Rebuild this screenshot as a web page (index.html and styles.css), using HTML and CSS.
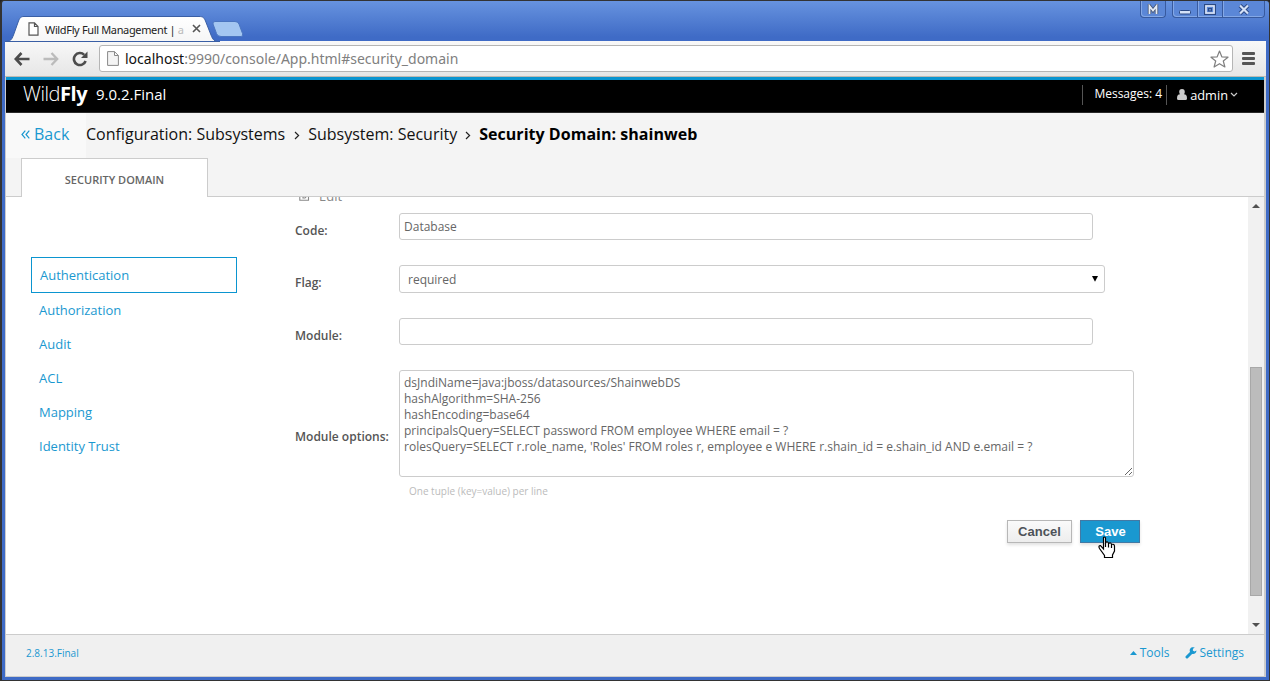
FILE: index.html
```html
<!DOCTYPE html>
<html lang="en">
<head>
<meta charset="utf-8">
<title>WildFly Full Management</title>
<link rel="stylesheet" href="styles.css">
</head>
<body>
<div class="window">
  <div class="titlebar">
    <svg class="tabshape" width="240" height="26" viewBox="0 0 240 26">
      <defs><linearGradient id="tg" x1="0" y1="0" x2="0" y2="1"><stop offset="0" stop-color="#fff"/><stop offset="1" stop-color="#f6f6f6"/></linearGradient></defs>
      <path d="M0 25.500C6 25 6.500 24 8.500 19L13.500 5C15 1.500 16 .5 19 .5H194C198 .5 199 1.500 200.500 5L206 19C208 24 209 25.500 215 25.500Z" fill="url(#tg)" stroke="#3a5fa5"/>
      <path d="M208 8Q207.500 5.500 210 5.500H230Q233 5.500 234 8L237.500 17.500Q238.500 20.500 236 20.500H216Q212.500 20.500 211.500 17.500Z" fill="#a3c6f1" stroke="#4a75c0"/>
    </svg>
    <div class="tabtext">
      <svg width="11" height="14" viewBox="0 0 11 14"><path d="M1 .8H6.500L10 4.500V13.200H1ZM6.500 .8V4.500H10" fill="#fff" stroke="#555" stroke-width="1.200"/></svg>
      <span class="tabname">WildFly Full Management | <i>a</i></span>
      <svg class="tabx" width="9" height="9" viewBox="0 0 9 9"><path d="M1 1L8 8M8 1L1 8" stroke="#555" stroke-width="1.600"/></svg>
    </div>
    <div class="wbtns">
      <div class="wb w1"><svg width="12" height="11" viewBox="0 0 12 11"><path d="M2.500 10V2L6 6.500L9.500 2V10" fill="none" stroke="#46536e" stroke-width="3.400"/><path d="M2.500 10V2L6 6.500L9.500 2V10" fill="none" stroke="#e4ebf6" stroke-width="1.800"/></svg></div>
      <div class="wb w2"><svg width="12" height="11" viewBox="0 0 12 11"><rect x=".5" y="6.500" width="11" height="3.500" rx="1" fill="#d5e2f8" stroke="#2c4a85"/></svg></div>
      <div class="wb w3"><svg width="12" height="11" viewBox="0 0 12 11"><rect x="1.500" y="1.500" width="9" height="8" fill="none" stroke="#2c4a85" stroke-width="3"/><rect x="2" y="2" width="8" height="7" fill="none" stroke="#d5e2f8" stroke-width="1.800"/><rect x="4.500" y="4.500" width="3" height="2.500" fill="none" stroke="#2c4a85"/></svg></div>
      <div class="wb w4"><svg width="12" height="11" viewBox="0 0 12 11"><path d="M2 1.500L10 9.500M10 1.500L2 9.500" stroke="#2c4a85" stroke-width="4"/><path d="M2 1.500L10 9.500M10 1.500L2 9.500" stroke="#d5e2f8" stroke-width="2.200"/></svg></div>
    </div>
  </div>
  <div class="toolbar">
    <svg class="nav" width="16" height="14" viewBox="0 0 16 14"><path d="M15.500 7H2M7.500 1L1.800 7L7.500 13" fill="none" stroke="#4c4c4c" stroke-width="2.600"/></svg>
    <svg class="nav" width="16" height="14" viewBox="0 0 16 14"><path d="M.5 7H14M8.500 1L14.200 7L8.500 13" fill="none" stroke="#bbb" stroke-width="2.300"/></svg>
    <svg class="nav" width="16" height="16" viewBox="0 0 16 16"><path d="M13.600 10A6 6 0 1 1 12.200 3.800" fill="none" stroke="#4c4c4c" stroke-width="2.600"/><path d="M15.500 .5V7H9Z" fill="#4c4c4c"/></svg>
    <div class="omni">
      <svg width="12" height="16" viewBox="0 0 12 16"><path d="M.6 .6H7.500L11.400 4.500V14.400H.6ZM7.500 .6V4.500H11.400" fill="#f4f4f4" stroke="#888"/></svg>
      <span class="url">localhost<i>:9990/console/App.html#security_domain</i></span>
      <svg class="star" width="19" height="18" viewBox="0 0 19 18"><path d="M9.500 1L11.800 6.800L18 7.200L13.300 11L14.900 17L9.500 13.700L4.100 17L5.700 11L1 7.200L7.200 6.800Z" fill="#fff" stroke="#808080" stroke-width="1.200" stroke-linejoin="round"/></svg>
    </div>
    <div class="burger"><b></b><b></b><b></b></div>
  </div>
  <div class="page">
    <header class="head">
      <span class="logo">Wild<b>Fly</b></span>
      <span class="ver">9.0.2.Final</span>
      <span class="msgs">Messages: 4</span>
      <span class="user">
        <svg width="10" height="11" viewBox="0 0 10 11"><path d="M5 0C7 0 7.800 1.300 7.800 3C7.800 4 7.400 4.800 7 5.300C9 5.500 10 6.500 10 9.500Q10 11 8.500 11H1.500Q0 11 0 9.500C0 6.500 1 5.500 3 5.300C2.600 4.800 2.200 4 2.200 3C2.200 1.300 3 0 5 0Z" fill="#ccc"/></svg>
        <span class="admin">admin</span>
        <svg width="8" height="5" viewBox="0 0 8 5"><path d="M1 1L4 4L7 1" fill="none" stroke="#ccc" stroke-width="1.200"/></svg>
      </span>
    </header>
    <div class="crumbs">
      <div class="back"><svg width="9" height="9" viewBox="0 0 9 9"><path d="M4.300 .7L1 4.500L4.300 8.300M8.300 .7L5 4.500L8.300 8.300" fill="none" stroke="#1a98d0" stroke-width="1.200"/></svg><span>Back</span></div>
      <span class="c1">Configuration: Subsystems</span>
      <svg class="chev" width="6" height="9" viewBox="0 0 6 9"><path d="M1 1L4.600 4.500L1 8" fill="none" stroke="#222" stroke-width="1.200"/></svg>
      <span class="c2">Subsystem: Security</span>
      <svg class="chev" width="6" height="9" viewBox="0 0 6 9"><path d="M1 1L4.600 4.500L1 8" fill="none" stroke="#222" stroke-width="1.200"/></svg>
      <span class="c3">Security Domain: shainweb</span>
    </div>
    <div class="tabs"><div class="tab"><span>SECURITY DOMAIN</span></div><div class="tabrest"></div></div>
    <main class="main">
      <nav class="side">
        <a class="on">Authentication</a><a>Authorization</a><a>Audit</a><a>ACL</a><a>Mapping</a><a>Identity Trust</a>
      </nav>
      <div class="form">
        <div class="edit"><svg width="11" height="10" viewBox="0 0 11 10"><path d="M6.500 1.500H.8V9.300H9.500V6M4 7V5L9 .5L10.500 2L6 7Z" fill="none" stroke="#888" stroke-width="1.100"/></svg><span>Edit</span></div>
        <div class="row r1"><label>Code:</label><div class="inp">Database</div></div>
        <div class="row r2"><label>Flag:</label><div class="inp sel"><span>required</span><svg width="6" height="6" viewBox="0 0 6 6"><path d="M0 0H6L3 5.800Z"/></svg></div></div>
        <div class="row r3"><label>Module:</label><div class="inp"></div></div>
        <div class="row r4"><label>Module options:</label><textarea class="area" spellcheck="false">dsJndiName=java:jboss/datasources/ShainwebDS
hashAlgorithm=SHA-256
hashEncoding=base64
principalsQuery=SELECT password FROM employee WHERE email = ?
rolesQuery=SELECT r.role_name, 'Roles' FROM roles r, employee e WHERE r.shain_id = e.shain_id AND e.email = ?</textarea></div>
        <div class="hint">One tuple (key=value) per line</div>
        <div class="btns"><div class="btn">Cancel</div><div class="btn save">Save
          <svg class="cursor" width="18" height="23" viewBox="0 0 18 23"><path d="M5.500 13.500V2Q5.500 1 6.500 1Q7.500 1 7.500 2V8M7.500 6.500Q10 5 10.500 7.500Q13 6 13.500 8.500Q16.500 7.500 16.500 10.500V15L14.500 19V21.500H6.500V19.500L1.500 12.500Q0 9.500 2.500 9.500L5.500 13V2Q5.500 1 6.500 1Q7.500 1 7.500 2Z" fill="#fff" stroke="#000" stroke-width="1.200"/><path d="M7.500 7V11M10.500 7.500V11.500M13.500 8.500V12" stroke="#000" stroke-width="1.200"/></svg>
        </div></div>
      </div>
      <div class="scroll"><svg width="8" height="4" viewBox="0 0 8 4"><path d="M0 4L4 0L8 4Z" fill="#505050"/></svg><div class="thumb"></div><svg width="8" height="4" viewBox="0 0 8 4"><path d="M0 0L4 4L8 0Z" fill="#505050"/></svg></div>
    </main>
    <footer class="foot">
      <span class="fv">2.8.13.Final</span>
      <svg class="up" width="7" height="4" viewBox="0 0 7 4"><path d="M0 4L3.500 0L7 4Z" fill="#1a98d0"/></svg>
      <span class="tools">Tools</span>
      <svg class="wrench" width="12" height="12" viewBox="0 0 12 12"><path d="M2 10L7 5" stroke="#1a98d0" stroke-width="3" stroke-linecap="round"/><path d="M9.800 .6A3.400 3.400 0 1 0 11.500 3.600L9.300 4.600L7.800 3.400L8 1.800Z" fill="#1a98d0"/></svg>
      <span class="settings">Settings</span>
    </footer>
  </div>
</div>
</body>
</html>
```
FILE: styles.css
```css
*{box-sizing:border-box}
body{margin:0;font-family:"Open Sans",sans-serif;overflow:hidden;background:#222}
svg{display:block;flex:none}
span,label,a{white-space:nowrap}
.window{width:1270px;height:681px;display:flex;flex-direction:column;background:linear-gradient(#6793df 0,#3f6bc6 36px,#3f6bc6);border:1px solid #333;border-left-width:2px;border-radius:4px 4px 0 0;padding:0 3px 3px 3px}
.titlebar{height:40px;flex:none;display:flex;position:relative}
.tabshape{margin:15px 0 0 0}
.tabtext{position:absolute;left:23px;top:21px;display:flex;align-items:center;height:14px}
.tabname{font:11px "Noto Sans",sans-serif;color:#222;margin-left:6px;width:145px;letter-spacing:-.35px}
.tabname i{font-style:normal;color:#bbb}
.tabx{margin-left:2px;margin-top:-1px}
.wbtns{margin-left:auto;display:flex;height:17px;padding-right:1px}
.wb{border:1px solid #385a9e;border-top:0;box-shadow:inset 1px -1px #84a8e6;display:flex;align-items:center;justify-content:center;background:#5b87d7}
.w1{width:26px;border-radius:0 0 4px 4px;margin-right:6px}
.w2{width:26px;border-radius:0 0 0 4px}.w3{width:25px;border-left:0}.w4{width:42px;border-left:0;border-radius:0 0 4px 0}
.toolbar{height:36px;flex:none;background:linear-gradient(#f8f8f8,#e6e6e6);border-bottom:1px solid #bfbab2;display:flex;align-items:center;padding:0 11px 0 9px;gap:13px}
.omni{height:27px;flex:1;border:1px solid #b5b5b5;border-radius:3px;background:#fff;display:flex;align-items:center;padding:0 3px 0 7px;margin-left:-2px}
.url{font:14px "Noto Sans",sans-serif;color:#111;margin-left:6px}
.url i{font-style:normal;color:#808080}
.star{margin-left:auto}
.burger{display:flex;flex-direction:column;gap:2px;margin-left:-4px;width:13px}
.burger b{height:3px;background:#555;border-radius:1px}
.page{flex:1;min-height:0;display:flex;flex-direction:column;border:solid #ccc;border-width:0 2px 1px 1px;background:#fff}
.head{height:36px;flex:none;border-top:3px solid #0b95d0;border-bottom:1px solid #292929;background:#000;color:#fff;display:flex;align-items:center;padding:0 26px 2px 17px}
.logo{font:300 20px "Open Sans",sans-serif;letter-spacing:-.45px;width:73px;margin-top:-3px}
.logo b{font-weight:700}
.ver{font-size:15px;margin-top:-3px}
.msgs{margin-left:auto;font-size:12px;border:solid #555;border-width:0 1px;height:20px;line-height:18px;padding:0 4px 0 11px}
.user{display:flex;align-items:center;font-size:12.800px;margin-left:10px;margin-top:-1px}
.admin{margin:0 2px 0 3px}
.crumbs{height:45px;flex:none;background:#f4f4f4;display:flex;align-items:center;font-size:16px;color:#111;padding-bottom:3px}
.back{display:flex;align-items:center;gap:4px;color:#1a98d0;width:80px;padding-left:15px;height:45px;margin-bottom:-3px;padding-bottom:3px;background:#f9f9f9}
.chev{margin:2px 8px 0 9px}
.c2{margin-right:-1px}
.c3{font-weight:700;color:#000;letter-spacing:.03px}
.tabs{height:39px;flex:none;display:flex;background:#f4f4f4}
.tabs:before{content:"";width:15px;border-bottom:1px solid #ccc}
.tab{width:187px;border:1px solid #ccc;border-bottom:0;background:#fff;font-size:11px;font-weight:600;color:#666;display:flex;align-items:center;justify-content:center;padding-top:3px}
.tabrest{flex:1;border-bottom:1px solid #ccc}
.main{flex:1;min-height:0;display:flex;overflow:hidden}
.side{width:289px;padding:60px 0 0 25px;display:flex;flex-direction:column;font-size:13px;color:#1a98d0}
.side a{height:34px;line-height:34px;padding-left:8px}
.side .on{width:206px;height:36px;border:1px solid #0b95d0}
.form{width:852px;display:flex;flex-direction:column;font-size:12px;color:#666}
.edit{display:flex;align-items:flex-end;gap:9px;height:17px;margin-top:-9px;padding-left:4px;color:#888;font-size:13px}
.edit svg{margin-bottom:4px}
.row{display:flex}
.row label{width:104px;font-weight:600;color:#555;line-height:17px;padding-top:9px}
.inp{width:694px;height:27px;border:1px solid #ccc;border-radius:3px;padding:0 4px;line-height:26px;background:#fff}
.r1{margin-top:8px;height:52px}.r2{height:53px}.r3{height:52px}
.sel{width:706px;height:28px;line-height:27px;display:flex;align-items:center;justify-content:space-between;padding:1px 6px 0 8px}
.sel svg{fill:#000;margin-top:-2px}
.area{width:735px;height:107px;border:1px solid #ccc;border-radius:3px;padding:4px;font:12px/16px "Open Sans",sans-serif;letter-spacing:.01px;color:#666;margin:0;overflow:hidden;outline:0}
.r4 label{padding-top:58px}
.hint{font-size:10px;color:#bbb;margin:7px 0 0 114px;line-height:14px}
.btns{display:flex;justify-content:flex-end;gap:8px;margin:22px 7px 0 0}
.btn{width:65px;height:23px;border:1px solid #b7b7b7;background:linear-gradient(#fafafa,#ededed);box-shadow:0 2px 3px rgba(0,0,0,.12);font:bold 13px/21px "Liberation Sans",sans-serif;letter-spacing:.05px;color:#4d5258;text-align:center}
.save{width:60px;background:#1a98d0;border-color:#4379a4;color:#fff;position:relative;padding-left:1px}
.cursor{position:absolute;left:17px;top:15px}
.scroll{margin-left:auto;width:16px;background:#f1f1f1;display:flex;flex-direction:column;align-items:center;padding:7px 0 7px}
.thumb{width:12px;height:229px;background:#bcbcbc;border:1px solid #a8a8a8;margin-top:auto;margin-bottom:27px}
.foot{height:42px;flex:none;border-top:1px solid #ccc;background:#f0f0f0;display:flex;align-items:center;font-size:12px;color:#1a98d0;padding:0 20px 6px 20px}
.fv{font-size:10px;margin-right:auto}
.tools{margin:0 15px 0 3px}
.wrench{margin-right:3px}
```
